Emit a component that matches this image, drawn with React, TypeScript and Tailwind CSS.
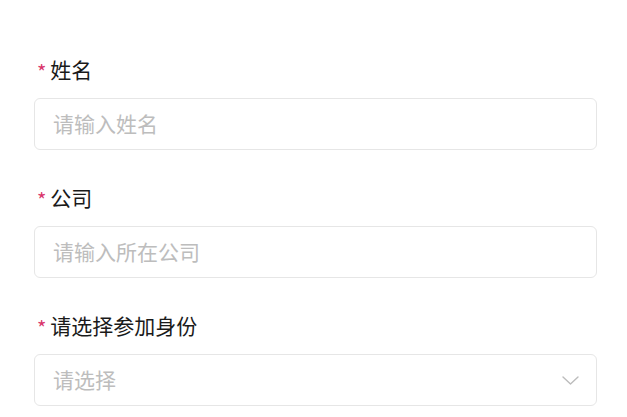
import React from "react";

const font = { fontFamily: '"Noto Sans CJK SC", "Noto Sans", sans-serif' };

type FieldProps = {
  label: string;
  placeholder: string;
  select?: boolean;
};

function Field({ label, placeholder, select }: FieldProps) {
  return (
    <div className="flex flex-col">
      <div className="flex items-center h-[28px] mb-[14px] pl-[3px]">
        <span className="text-[#d9366b] text-[20px] leading-none mr-[4px] mt-[3px]">*</span>
        <span className="text-[21px] text-[#1a1a1a]">{label}</span>
      </div>
      <div className="h-[52px] border border-[#e6e6e6] rounded-[6px] bg-white flex items-center justify-between pl-[18px] pr-[17px]">
        <span className="text-[21px] text-[#bdbdbd]">{placeholder}</span>
        {select && (
          <svg width="17" height="9" viewBox="0 0 17 9" fill="none">
            <path d="M1 1l7.5 7 7.5-7" stroke="#bcbcbc" strokeWidth="1.4" strokeLinecap="round" strokeLinejoin="round" />
          </svg>
        )}
      </div>
    </div>
  );
}

export default function App() {
  return (
    <div className="w-[627px] h-[417px] bg-white overflow-hidden" style={font}>
      <div className="flex flex-col gap-[34px] px-[34px] pr-[30px] pt-[56px]">
        <Field label="姓名" placeholder="请输入姓名" />
        <Field label="公司" placeholder="请输入所在公司" />
        <Field label="请选择参加身份" placeholder="请选择" select />
      </div>
    </div>
  );
}
